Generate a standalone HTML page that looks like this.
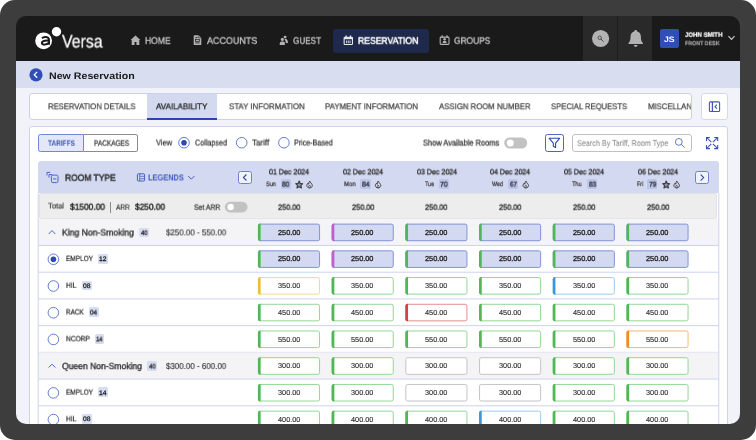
<!DOCTYPE html>
<html><head><meta charset="utf-8"><title>New Reservation</title>
<style>

html,body{margin:0;padding:0;background:#fff;}
body{width:756px;height:440px;position:relative;overflow:hidden;font-family:"Liberation Sans", sans-serif;text-rendering:geometricPrecision;}
.a{position:absolute;box-sizing:border-box;}
.t{position:absolute;white-space:nowrap;transform-origin:0 50%;will-change:transform;}

</style></head>
<body>
<div class="a" style="left:0;top:0;width:756px;height:440px;background:#3d3d3d;border-radius:15px;"></div>
<div class="a" style="left:16px;top:16px;width:724px;height:408px;border-radius:10px;overflow:hidden;"><div class="a" style="left:-16px;top:-16px;width:756px;height:440px;will-change:transform;">
<div class="a" style="left:16px;top:50px;width:724px;height:374px;background:#f2f3f8;"></div>
<div class="a" style="left:16px;top:16px;width:724px;height:45px;background:#1b1a1a;"></div>
<div class="a" style="left:583px;top:16px;width:34px;height:45px;background:#2a2929;"></div>
<div class="a" style="left:617px;top:16px;width:35px;height:45px;background:#2a2929;border-left:1px solid #1d1d1d;"></div>
<svg class="a" style="left:33px;top:24px;" width="30" height="28" viewBox="0 0 30 28"><circle cx="10.6" cy="16.8" r="8.4" fill="#fff"/><circle cx="23.5" cy="7.8" r="4.7" fill="#fff"/>
<path d="M9 14.3 C10.5 12.4 16 12.2 16 16 L16 20.8 M16 16.8 C11.5 16.2 8.8 17.2 8.8 19 C8.8 21.2 13.8 21.2 16 18.8" fill="none" stroke="#1b1a1a" stroke-width="2"/></svg>
<svg class="a" style="left:130px;top:35px;" width="11" height="11" viewBox="-1.2 -1.2 22 22"><path d="M9.8 0 L0 8.8 L2.2 8.8 L2.2 19 L7.9 19 L7.9 12.8 L11.7 12.8 L11.7 19 L17.4 19 L17.4 8.8 L19.6 8.8 Z" fill="#b2b2b2"/></svg>
<svg class="a" style="left:193px;top:35px;" width="9" height="10" viewBox="-0.7 -0.3 9 10"><path d="M0 0.4 Q0 0 0.4 0 H5 L7.6 2.6 V9.3 Q7.6 9.7 7.2 9.7 H0.4 Q0 9.7 0 9.3 Z" fill="#b2b2b2"/><path d="M1.7 2.3H3.9M1.7 7.6H5.9" stroke="#1b1a1a" stroke-width="0.8"/><rect x="1.9" y="4" width="3.8" height="2" fill="none" stroke="#1b1a1a" stroke-width="0.7"/><path d="M5 0V2.6H7.6" fill="none" stroke="#1b1a1a" stroke-width="0.5"/></svg>
<svg class="a" style="left:279px;top:35px;" width="10" height="11" viewBox="-0.5 0 10 11"><circle cx="5.6" cy="2.1" r="1.45" fill="#b2b2b2"/><path d="M5 3.9 H6.6 Q8.5 4.6 8.5 8.1 H6.2 V6.4 Q5.4 5.2 5 3.9Z" fill="#b2b2b2"/><circle cx="2.85" cy="4.4" r="1.55" fill="#b2b2b2"/><path d="M0.3 10 V8.2 Q0.3 6.5 2 6.5 H3.7 Q5.4 6.5 5.4 8.2 V10 Z" fill="#b2b2b2"/></svg>
<div class="a" style="left:332.5px;top:28.6px;width:96.4px;height:24px;background:#1f294c;border-radius:3px;"></div>
<svg class="a" style="left:343px;top:35px;" width="11" height="11" viewBox="-0.6 -0.5 11 11"><rect x="0.55" y="1.7" width="8.3" height="7.3" rx="0.8" fill="none" stroke="#e9e9f0" stroke-width="1.1"/><path d="M0.6 1.7H8.8V3.7H0.6Z" fill="#e9e9f0"/><path d="M2.5 0.1V2.4M6.9 0.1V2.4" stroke="#e9e9f0" stroke-width="1.3"/><path d="M3 5V7.7M4.7 5V7.7M6.4 5V7.7" stroke="#e9e9f0" stroke-width="0.9"/></svg>
<svg class="a" style="left:439px;top:35px;" width="11" height="11" viewBox="-0.6 -0.2 11 11"><rect x="0.6" y="1.9" width="8.8" height="7.3" rx="0.8" fill="none" stroke="#b2b2b2" stroke-width="1.1"/><path d="M2.6 0.1V2.8M7.4 0.1V2.8" stroke="#b2b2b2" stroke-width="1.2"/><circle cx="5" cy="4" r="1.3" fill="#b2b2b2"/><path d="M2.9 7.9 Q2.9 5.6 5 5.6 Q7.1 5.6 7.1 7.9Z" fill="#b2b2b2"/></svg>
<svg class="a" style="left:591px;top:29px;" width="19" height="19" viewBox="-0.6 -0.5 19 19"><circle cx="9" cy="9" r="8.6" fill="#b3b3b3"/><circle cx="8.1" cy="8.3" r="1.7" fill="none" stroke="#474747" stroke-width="0.9"/><path d="M9.5 9.7L11.6 11.8" stroke="#474747" stroke-width="1" stroke-linecap="round"/></svg>
<svg class="a" style="left:628px;top:29px;" width="16" height="19" viewBox="-0.2 -0.6 16 19"><path d="M7.5 0.5 C8.4 0.5 9 1.1 9 2 C11.8 2.6 12.7 5 12.7 7.5 C12.7 11 13.4 12.3 14.7 13.4 V14.5 H0.3 V13.4 C1.6 12.3 2.3 11 2.3 7.5 C2.3 5 3.2 2.6 6 2 C6 1.1 6.6 0.5 7.5 0.5Z" fill="#b2b2b2"/><path d="M5.7 15.5 H9.3 C9.3 17.9 5.7 17.9 5.7 15.5Z" fill="#b2b2b2"/></svg>
<div class="a" style="left:659.8px;top:29px;width:19.4px;height:19.2px;background:#2f4fb7;border-radius:2px;"></div>
<svg class="a" style="left:727px;top:35px;" width="9" height="6" viewBox="-0.5 0 9 6"><path d="M1 1.2L4 4.4L7 1.2" fill="none" stroke="#cfcfcf" stroke-width="1.1"/></svg>
<div class="a" style="left:16px;top:61px;width:724px;height:27.2px;background:#d8ddf0;"></div>
<svg class="a" style="left:29px;top:68px;" width="14" height="14" viewBox="-0.206 0 14.412 14.412"><circle cx="7" cy="7" r="6.8" fill="#2f4fb7"/><path d="M8.2 4L5.2 7L8.2 10" fill="none" stroke="#fff" stroke-width="1.3"/></svg>
<div class="a" style="left:29.3px;top:93.2px;width:662.4px;height:27px;background:#fff;border:1px solid #c9d0f0;border-radius:3px;"></div>
<div class="a" style="left:147px;top:94px;width:69.5px;height:25.4px;background:#d3d9ee;"></div>
<div class="a" style="left:147px;top:117.8px;width:69.5px;height:2.2px;background:#2a46ab;"></div>
<div class="a" style="left:700.5px;top:93.2px;width:27.5px;height:27px;background:#fff;border:1px solid #d3d8ef;border-radius:3px;"></div>
<svg class="a" style="left:708px;top:101px;" width="13" height="12" viewBox="-0.8 -0.3 13 12"><rect x="0.6" y="0.6" width="10.2" height="9.6" rx="1" fill="none" stroke="#3d58b8" stroke-width="1.1"/><path d="M3.6 0.6V10.2" stroke="#3d58b8" stroke-width="1.3"/><path d="M8.2 3.4L6.2 5.4L8.2 7.4" fill="none" stroke="#3d58b8" stroke-width="1.1"/></svg>
<div class="a" style="left:29.3px;top:125.6px;width:698.7px;height:310px;background:#fff;border:1px solid #cdd3f0;border-radius:3px;"></div>
<div class="a" style="left:38.2px;top:134.2px;width:46.3px;height:17.6px;background:#e3e7f7;border:1px solid #7087d3;border-radius:2.5px 0 0 2.5px;"></div>
<div class="a" style="left:84px;top:134.2px;width:53.8px;height:17.6px;background:#fff;border:1px solid #8c8c8c;border-radius:0 2.5px 2.5px 0;border-left:none;"></div>
<svg class="a" style="left:177px;top:136px;" width="14" height="14" viewBox="-0.5 -0.2 14 14"><circle cx="6.5" cy="6.5" r="5.3" fill="#fff" stroke="#657cd0" stroke-width="1"/><circle cx="6.5" cy="6.5" r="2.8" fill="#2c49ab"/></svg>
<svg class="a" style="left:235px;top:136px;" width="14" height="14" viewBox="-0.2 -0.2 14 14"><circle cx="6.5" cy="6.5" r="5.3" fill="#fff" stroke="#657cd0" stroke-width="1"/></svg>
<svg class="a" style="left:277px;top:136px;" width="14" height="14" viewBox="-0.4 -0.2 14 14"><circle cx="6.5" cy="6.5" r="5.3" fill="#fff" stroke="#657cd0" stroke-width="1"/></svg>
<svg class="a" style="left:504px;top:137px;" width="24" height="12" viewBox="-0.2 -0.4 24 12"><rect x="0" y="0" width="23" height="11.2" rx="5.6" fill="#c2c2c2"/><circle cx="6.1" cy="5.6" r="3.4999999999999996" fill="#fff"/></svg>
<div class="a" style="left:545.2px;top:133.8px;width:18.5px;height:18px;background:#fff;border:1px solid #4d66c2;border-radius:2.5px;"></div>
<svg class="a" style="left:548px;top:137px;" width="13" height="12" viewBox="-0.5 -0.5 13 12"><path d="M0.7 0.8H11.1L7.1 5.7V10.1L4.8 8.8V5.7Z" fill="none" stroke="#2c49ab" stroke-width="1.1" stroke-linejoin="round"/></svg>
<div class="a" style="left:572.4px;top:134.2px;width:119.4px;height:17.6px;background:#fff;border:1px solid #c0c0c0;border-radius:3px;"></div>
<svg class="a" style="left:674px;top:137px;" width="12" height="12" viewBox="-0.8 -0.9 12 12"><circle cx="4" cy="4" r="3.4" fill="none" stroke="#4f6ac6" stroke-width="0.9"/><path d="M6.4 6.4L9.8 9.6" stroke="#4f6ac6" stroke-width="0.9"/></svg>
<svg class="a" style="left:705px;top:136px;" width="14" height="14" viewBox="-0.8 -0.7 14 14"><path d="M0.7 4.2V0.7H4.2M0.7 0.7L5.5 5.5M8.4 0.7H11.9V4.2M11.9 0.7L7.1 5.5M0.7 8.4V11.9H4.2M0.7 11.9L5.5 7.1M11.9 8.4V11.9H8.4M11.9 11.9L7.1 7.1" fill="none" stroke="#3853b5" stroke-width="1.05"/></svg>
<div class="a" style="left:38.2px;top:161.2px;width:680.6px;height:32px;background:#d3d9f0;border-radius:3px 3px 0 0;"></div>
<svg class="a" style="left:46px;top:171px;" width="13" height="13" viewBox="-0.4 -0.8 13 13"><path d="M0.6 3.6V0.6H3.8M2.6 5.8V2.8H5.8" fill="none" stroke="#4a66c4" stroke-width="1"/><rect x="5" y="3.3" width="6.6" height="7.5" rx="1.5" fill="none" stroke="#4a66c4" stroke-width="1"/><path d="M6.6 7.1H10" stroke="#4a66c4" stroke-width="1"/></svg>
<svg class="a" style="left:136px;top:173px;" width="10" height="9" viewBox="-0.9 -0.3 10 9"><rect x="0.5" y="0.5" width="7.2" height="7.2" rx="0.8" fill="none" stroke="#4560bd" stroke-width="1"/><path d="M2.8 0.5V7.7M2.8 3H7.7M2.8 5.4H7.7" stroke="#4560bd" stroke-width="0.8"/></svg>
<svg class="a" style="left:187px;top:175px;" width="8" height="6" viewBox="-0.6 -0.2 8 6"><path d="M0.6 0.8L3.7 4L6.8 0.8" fill="none" stroke="#4560bd" stroke-width="1"/></svg>
<div class="a" style="left:238px;top:170.8px;width:13.9px;height:13.4px;background:#f1f3fb;border:1px solid #6c82d1;border-radius:2.5px;"></div>
<svg class="a" style="left:238px;top:170px;" width="14" height="15" viewBox="0 -0.8 14 15"><path d="M8.450000 3.700000L5.450000 6.700000L8.450000 9.700000" fill="none" stroke="#2c49ab" stroke-width="1.1"/></svg>
<div class="a" style="left:695.1px;top:170.8px;width:14.1px;height:13.5px;background:#f1f3fb;border:1px solid #6c82d1;border-radius:2.5px;"></div>
<svg class="a" style="left:695px;top:170px;" width="15" height="15" viewBox="-0.1 -0.8 15 15"><path d="M5.550000 3.750000L8.550000 6.750000L5.550000 9.750000" fill="none" stroke="#2c49ab" stroke-width="1.1"/></svg>
<div class="a" style="left:280.5px;top:179.1px;width:10.3px;height:9.8px;background:#bcc6ea;border-radius:1.5px;"></div>
<svg class="a" style="left:295px;top:180px;" width="9" height="9" viewBox="0 -0.3 9 9"><path d="M4.2 0.8L5.25 3.1L7.7 3.4L5.9 5.1L6.4 7.6L4.2 6.35L2 7.6L2.5 5.1L0.7 3.4L3.15 3.1Z" fill="#8d93a8" stroke="#3d3d3d" stroke-width="1.15" stroke-linejoin="round"/></svg>
<svg class="a" style="left:306px;top:180px;" width="8" height="9" viewBox="-0.1 -0.4 8 9"><path d="M3.6 0.6C3.9 2.2 6.2 3.2 6.2 5.2C6.2 6.6 5.1 7.5 3.5 7.5C1.9 7.5 0.7 6.6 0.7 5.1C0.7 4.1 1.3 3.3 1.9 2.8C2 3.5 2.4 3.8 2.7 3.9C2.6 2.6 2.9 1.4 3.6 0.6Z" fill="none" stroke="#3a3a3a" stroke-width="0.9" stroke-linejoin="round"/><path d="M3.5 7.3C2.8 7.3 2.5 6.8 2.5 6.3C2.5 5.7 3 5.4 3.5 4.6C4 5.4 4.5 5.7 4.5 6.3C4.5 6.8 4.2 7.3 3.5 7.3Z" fill="none" stroke="#3a3a3a" stroke-width="0.7"/></svg>
<div class="a" style="left:360px;top:179.1px;width:10.5px;height:9.8px;background:#bcc6ea;border-radius:1.5px;"></div>
<svg class="a" style="left:374px;top:180px;" width="8" height="9" viewBox="-0.6 -0.4 8 9"><path d="M3.6 0.6C3.9 2.2 6.2 3.2 6.2 5.2C6.2 6.6 5.1 7.5 3.5 7.5C1.9 7.5 0.7 6.6 0.7 5.1C0.7 4.1 1.3 3.3 1.9 2.8C2 3.5 2.4 3.8 2.7 3.9C2.6 2.6 2.9 1.4 3.6 0.6Z" fill="none" stroke="#3a3a3a" stroke-width="0.9" stroke-linejoin="round"/><path d="M3.5 7.3C2.8 7.3 2.5 6.8 2.5 6.3C2.5 5.7 3 5.4 3.5 4.6C4 5.4 4.5 5.7 4.5 6.3C4.5 6.8 4.2 7.3 3.5 7.3Z" fill="none" stroke="#3a3a3a" stroke-width="0.7"/></svg>
<div class="a" style="left:438.6px;top:179.1px;width:10.6px;height:9.8px;background:#bcc6ea;border-radius:1.5px;"></div>
<div class="a" style="left:508px;top:179.1px;width:10px;height:9.8px;background:#bcc6ea;border-radius:1.5px;"></div>
<svg class="a" style="left:522px;top:180px;" width="8" height="9" viewBox="-0.3 -0.4 8 9"><path d="M3.6 0.6C3.9 2.2 6.2 3.2 6.2 5.2C6.2 6.6 5.1 7.5 3.5 7.5C1.9 7.5 0.7 6.6 0.7 5.1C0.7 4.1 1.3 3.3 1.9 2.8C2 3.5 2.4 3.8 2.7 3.9C2.6 2.6 2.9 1.4 3.6 0.6Z" fill="none" stroke="#3a3a3a" stroke-width="0.9" stroke-linejoin="round"/><path d="M3.5 7.3C2.8 7.3 2.5 6.8 2.5 6.3C2.5 5.7 3 5.4 3.5 4.6C4 5.4 4.5 5.7 4.5 6.3C4.5 6.8 4.2 7.3 3.5 7.3Z" fill="none" stroke="#3a3a3a" stroke-width="0.7"/></svg>
<div class="a" style="left:587px;top:179.1px;width:10.2px;height:9.8px;background:#bcc6ea;border-radius:1.5px;"></div>
<div class="a" style="left:647.2px;top:179.1px;width:10.3px;height:9.8px;background:#bcc6ea;border-radius:1.5px;"></div>
<svg class="a" style="left:662px;top:180px;" width="9" height="9" viewBox="0 -0.3 9 9"><path d="M4.2 0.8L5.25 3.1L7.7 3.4L5.9 5.1L6.4 7.6L4.2 6.35L2 7.6L2.5 5.1L0.7 3.4L3.15 3.1Z" fill="#8d93a8" stroke="#3d3d3d" stroke-width="1.15" stroke-linejoin="round"/></svg>
<svg class="a" style="left:673px;top:180px;" width="8" height="9" viewBox="-0.2 -0.4 8 9"><path d="M3.6 0.6C3.9 2.2 6.2 3.2 6.2 5.2C6.2 6.6 5.1 7.5 3.5 7.5C1.9 7.5 0.7 6.6 0.7 5.1C0.7 4.1 1.3 3.3 1.9 2.8C2 3.5 2.4 3.8 2.7 3.9C2.6 2.6 2.9 1.4 3.6 0.6Z" fill="none" stroke="#3a3a3a" stroke-width="0.9" stroke-linejoin="round"/><path d="M3.5 7.3C2.8 7.3 2.5 6.8 2.5 6.3C2.5 5.7 3 5.4 3.5 4.6C4 5.4 4.5 5.7 4.5 6.3C4.5 6.8 4.2 7.3 3.5 7.3Z" fill="none" stroke="#3a3a3a" stroke-width="0.7"/></svg>
<div class="a" style="left:38.8px;top:193.4px;width:678.6px;height:25.2px;background:#ededed;border:1px solid #e2e2e2;border-radius:2px;"></div>
<div class="a" style="left:110.3px;top:201.5px;width:0.9px;height:11.5px;background:#8a8a8a;"></div>
<svg class="a" style="left:224px;top:201px;" width="24" height="12" viewBox="-0.8 -0.7 24 12"><rect x="0" y="0" width="22.8" height="10.7" rx="5.35" fill="#c2c2c2"/><circle cx="5.85" cy="5.35" r="3.2499999999999996" fill="#fff"/></svg>
<svg class="a" style="left:0;top:0;" width="756" height="440" viewBox="0 0 756 440">
<rect x="38.2" y="218.8" width="680.6" height="26.72" fill="#f4f4f6"/>
<rect x="38.2" y="244.97" width="680.6" height="1" fill="#ccd3f1"/>
<rect x="38.2" y="271.69" width="680.6" height="1" fill="#ccd3f1"/>
<rect x="38.2" y="298.41" width="680.6" height="1" fill="#ccd3f1"/>
<rect x="38.2" y="325.13" width="680.6" height="1" fill="#ccd3f1"/>
<rect x="38.2" y="351.85" width="680.6" height="1" fill="#ccd3f1"/>
<rect x="38.2" y="352.4" width="680.6" height="26.72" fill="#f4f4f6"/>
<rect x="38.2" y="378.57" width="680.6" height="1" fill="#ccd3f1"/>
<rect x="38.2" y="405.29" width="680.6" height="1" fill="#ccd3f1"/>
<rect x="38.2" y="432.01" width="680.6" height="1" fill="#ccd3f1"/>
<rect x="258.45" y="224.11" width="61.1" height="16.6" rx="1.8" fill="#d3d9f0" stroke="#8094da"/>
<path d="M260.65 223.61H260.05Q257.95 223.61 257.95 225.71V239.11Q257.95 241.21 260.05 241.21H260.65Z" fill="#52b657"/>
<rect x="332.15" y="224.11" width="61.1" height="16.6" rx="1.8" fill="#d3d9f0" stroke="#8094da"/>
<path d="M334.35 223.61H333.75Q331.65 223.61 331.65 225.71V239.11Q331.65 241.21 333.75 241.21H334.35Z" fill="#c25fd0"/>
<rect x="405.85" y="224.11" width="61.1" height="16.6" rx="1.8" fill="#d3d9f0" stroke="#8094da"/>
<path d="M408.05 223.61H407.45Q405.35 223.61 405.35 225.71V239.11Q405.35 241.21 407.45 241.21H408.05Z" fill="#52b657"/>
<rect x="479.55" y="224.11" width="61.1" height="16.6" rx="1.8" fill="#d3d9f0" stroke="#8094da"/>
<path d="M481.75 223.61H481.15Q479.05 223.61 479.05 225.71V239.11Q479.05 241.21 481.15 241.21H481.75Z" fill="#52b657"/>
<rect x="553.25" y="224.11" width="61.1" height="16.6" rx="1.8" fill="#d3d9f0" stroke="#8094da"/>
<path d="M555.45 223.61H554.85Q552.75 223.61 552.75 225.71V239.11Q552.75 241.21 554.85 241.21H555.45Z" fill="#52b657"/>
<rect x="626.95" y="224.11" width="61.1" height="16.6" rx="1.8" fill="#d3d9f0" stroke="#8094da"/>
<path d="M629.15 223.61H628.55Q626.45 223.61 626.45 225.71V239.11Q626.45 241.21 628.55 241.21H629.15Z" fill="#52b657"/>
<rect x="258.45" y="250.83" width="61.1" height="16.6" rx="1.8" fill="#d3d9f0" stroke="#8094da"/>
<path d="M260.65 250.33H260.05Q257.95 250.33 257.95 252.43V265.83Q257.95 267.93 260.05 267.93H260.65Z" fill="#52b657"/>
<rect x="332.15" y="250.83" width="61.1" height="16.6" rx="1.8" fill="#d3d9f0" stroke="#8094da"/>
<path d="M334.35 250.33H333.75Q331.65 250.33 331.65 252.43V265.83Q331.65 267.93 333.75 267.93H334.35Z" fill="#c25fd0"/>
<rect x="405.85" y="250.83" width="61.1" height="16.6" rx="1.8" fill="#d3d9f0" stroke="#8094da"/>
<path d="M408.05 250.33H407.45Q405.35 250.33 405.35 252.43V265.83Q405.35 267.93 407.45 267.93H408.05Z" fill="#52b657"/>
<rect x="479.55" y="250.83" width="61.1" height="16.6" rx="1.8" fill="#d3d9f0" stroke="#8094da"/>
<path d="M481.75 250.33H481.15Q479.05 250.33 479.05 252.43V265.83Q479.05 267.93 481.15 267.93H481.75Z" fill="#52b657"/>
<rect x="553.25" y="250.83" width="61.1" height="16.6" rx="1.8" fill="#d3d9f0" stroke="#8094da"/>
<path d="M555.45 250.33H554.85Q552.75 250.33 552.75 252.43V265.83Q552.75 267.93 554.85 267.93H555.45Z" fill="#52b657"/>
<rect x="626.95" y="250.83" width="61.1" height="16.6" rx="1.8" fill="#d3d9f0" stroke="#8094da"/>
<path d="M629.15 250.33H628.55Q626.45 250.33 626.45 252.43V265.83Q626.45 267.93 628.55 267.93H629.15Z" fill="#52b657"/>
<rect x="258.45" y="277.55" width="61.1" height="16.6" rx="1.8" fill="#fff" stroke="#f0da96"/>
<path d="M260.65 277.05H260.05Q257.95 277.05 257.95 279.15V292.55Q257.95 294.65 260.05 294.65H260.65Z" fill="#e6bf3c"/>
<rect x="332.15" y="277.55" width="61.1" height="16.6" rx="1.8" fill="#fff" stroke="#93d697"/>
<path d="M334.35 277.05H333.75Q331.65 277.05 331.65 279.15V292.55Q331.65 294.65 333.75 294.65H334.35Z" fill="#52b657"/>
<rect x="405.85" y="277.55" width="61.1" height="16.6" rx="1.8" fill="#fff" stroke="#93d697"/>
<path d="M408.05 277.05H407.45Q405.35 277.05 405.35 279.15V292.55Q405.35 294.65 407.45 294.65H408.05Z" fill="#52b657"/>
<rect x="479.55" y="277.55" width="61.1" height="16.6" rx="1.8" fill="#fff" stroke="#93d697"/>
<path d="M481.75 277.05H481.15Q479.05 277.05 479.05 279.15V292.55Q479.05 294.65 481.15 294.65H481.75Z" fill="#52b657"/>
<rect x="553.25" y="277.55" width="61.1" height="16.6" rx="1.8" fill="#fff" stroke="#9ccbee"/>
<path d="M555.45 277.05H554.85Q552.75 277.05 552.75 279.15V292.55Q552.75 294.65 554.85 294.65H555.45Z" fill="#3b97d8"/>
<rect x="626.95" y="277.55" width="61.1" height="16.6" rx="1.8" fill="#fff" stroke="#93d697"/>
<path d="M629.15 277.05H628.55Q626.45 277.05 626.45 279.15V292.55Q626.45 294.65 628.55 294.65H629.15Z" fill="#52b657"/>
<rect x="258.45" y="304.27" width="61.1" height="16.6" rx="1.8" fill="#fff" stroke="#93d697"/>
<path d="M260.65 303.77H260.05Q257.95 303.77 257.95 305.87V319.27Q257.95 321.37 260.05 321.37H260.65Z" fill="#52b657"/>
<rect x="332.15" y="304.27" width="61.1" height="16.6" rx="1.8" fill="#fff" stroke="#93d697"/>
<path d="M334.35 303.77H333.75Q331.65 303.77 331.65 305.87V319.27Q331.65 321.37 333.75 321.37H334.35Z" fill="#52b657"/>
<rect x="405.85" y="304.27" width="61.1" height="16.6" rx="1.8" fill="#fff" stroke="#e38c8c"/>
<path d="M408.05 303.77H407.45Q405.35 303.77 405.35 305.87V319.27Q405.35 321.37 407.45 321.37H408.05Z" fill="#d04545"/>
<rect x="479.55" y="304.27" width="61.1" height="16.6" rx="1.8" fill="#fff" stroke="#93d697"/>
<path d="M481.75 303.77H481.15Q479.05 303.77 479.05 305.87V319.27Q479.05 321.37 481.15 321.37H481.75Z" fill="#52b657"/>
<rect x="553.25" y="304.27" width="61.1" height="16.6" rx="1.8" fill="#fff" stroke="#93d697"/>
<path d="M555.45 303.77H554.85Q552.75 303.77 552.75 305.87V319.27Q552.75 321.37 554.85 321.37H555.45Z" fill="#52b657"/>
<rect x="626.95" y="304.27" width="61.1" height="16.6" rx="1.8" fill="#fff" stroke="#93d697"/>
<path d="M629.15 303.77H628.55Q626.45 303.77 626.45 305.87V319.27Q626.45 321.37 628.55 321.37H629.15Z" fill="#52b657"/>
<rect x="258.45" y="330.99" width="61.1" height="16.6" rx="1.8" fill="#fff" stroke="#93d697"/>
<path d="M260.65 330.49H260.05Q257.95 330.49 257.95 332.59V345.99Q257.95 348.09 260.05 348.09H260.65Z" fill="#52b657"/>
<rect x="332.15" y="330.99" width="61.1" height="16.6" rx="1.8" fill="#fff" stroke="#93d697"/>
<path d="M334.35 330.49H333.75Q331.65 330.49 331.65 332.59V345.99Q331.65 348.09 333.75 348.09H334.35Z" fill="#52b657"/>
<rect x="405.85" y="330.99" width="61.1" height="16.6" rx="1.8" fill="#fff" stroke="#93d697"/>
<path d="M408.05 330.49H407.45Q405.35 330.49 405.35 332.59V345.99Q405.35 348.09 407.45 348.09H408.05Z" fill="#52b657"/>
<rect x="479.55" y="330.99" width="61.1" height="16.6" rx="1.8" fill="#fff" stroke="#93d697"/>
<path d="M481.75 330.49H481.15Q479.05 330.49 479.05 332.59V345.99Q479.05 348.09 481.15 348.09H481.75Z" fill="#52b657"/>
<rect x="553.25" y="330.99" width="61.1" height="16.6" rx="1.8" fill="#fff" stroke="#93d697"/>
<path d="M555.45 330.49H554.85Q552.75 330.49 552.75 332.59V345.99Q552.75 348.09 554.85 348.09H555.45Z" fill="#52b657"/>
<rect x="626.95" y="330.99" width="61.1" height="16.6" rx="1.8" fill="#fff" stroke="#f5b772"/>
<path d="M629.15 330.49H628.55Q626.45 330.49 626.45 332.59V345.99Q626.45 348.09 628.55 348.09H629.15Z" fill="#f08c1e"/>
<rect x="258.45" y="357.71" width="61.1" height="16.6" rx="1.8" fill="#fff" stroke="#93d697"/>
<path d="M260.65 357.21H260.05Q257.95 357.21 257.95 359.31V372.71Q257.95 374.81 260.05 374.81H260.65Z" fill="#52b657"/>
<rect x="332.15" y="357.71" width="61.1" height="16.6" rx="1.8" fill="#fff" stroke="#93d697"/>
<path d="M334.35 357.21H333.75Q331.65 357.21 331.65 359.31V372.71Q331.65 374.81 333.75 374.81H334.35Z" fill="#52b657"/>
<rect x="405.85" y="357.71" width="61.1" height="16.6" rx="1.8" fill="#fff" stroke="#c4c4c4"/>
<rect x="479.55" y="357.71" width="61.1" height="16.6" rx="1.8" fill="#fff" stroke="#c4c4c4"/>
<rect x="553.25" y="357.71" width="61.1" height="16.6" rx="1.8" fill="#fff" stroke="#93d697"/>
<path d="M555.45 357.21H554.85Q552.75 357.21 552.75 359.31V372.71Q552.75 374.81 554.85 374.81H555.45Z" fill="#52b657"/>
<rect x="626.95" y="357.71" width="61.1" height="16.6" rx="1.8" fill="#fff" stroke="#93d697"/>
<path d="M629.15 357.21H628.55Q626.45 357.21 626.45 359.31V372.71Q626.45 374.81 628.55 374.81H629.15Z" fill="#52b657"/>
<rect x="258.45" y="384.43" width="61.1" height="16.6" rx="1.8" fill="#fff" stroke="#93d697"/>
<path d="M260.65 383.93H260.05Q257.95 383.93 257.95 386.03V399.43Q257.95 401.53 260.05 401.53H260.65Z" fill="#52b657"/>
<rect x="332.15" y="384.43" width="61.1" height="16.6" rx="1.8" fill="#fff" stroke="#93d697"/>
<path d="M334.35 383.93H333.75Q331.65 383.93 331.65 386.03V399.43Q331.65 401.53 333.75 401.53H334.35Z" fill="#52b657"/>
<rect x="405.85" y="384.43" width="61.1" height="16.6" rx="1.8" fill="#fff" stroke="#c4c4c4"/>
<rect x="479.55" y="384.43" width="61.1" height="16.6" rx="1.8" fill="#fff" stroke="#c4c4c4"/>
<rect x="553.25" y="384.43" width="61.1" height="16.6" rx="1.8" fill="#fff" stroke="#93d697"/>
<path d="M555.45 383.93H554.85Q552.75 383.93 552.75 386.03V399.43Q552.75 401.53 554.85 401.53H555.45Z" fill="#52b657"/>
<rect x="626.95" y="384.43" width="61.1" height="16.6" rx="1.8" fill="#fff" stroke="#93d697"/>
<path d="M629.15 383.93H628.55Q626.45 383.93 626.45 386.03V399.43Q626.45 401.53 628.55 401.53H629.15Z" fill="#52b657"/>
<rect x="258.45" y="411.15" width="61.1" height="16.6" rx="1.8" fill="#fff" stroke="#93d697"/>
<path d="M260.65 410.65H260.05Q257.95 410.65 257.95 412.75V426.15Q257.95 428.25 260.05 428.25H260.65Z" fill="#52b657"/>
<rect x="332.15" y="411.15" width="61.1" height="16.6" rx="1.8" fill="#fff" stroke="#93d697"/>
<path d="M334.35 410.65H333.75Q331.65 410.65 331.65 412.75V426.15Q331.65 428.25 333.75 428.25H334.35Z" fill="#52b657"/>
<rect x="405.85" y="411.15" width="61.1" height="16.6" rx="1.8" fill="#fff" stroke="#93d697"/>
<path d="M408.05 410.65H407.45Q405.35 410.65 405.35 412.75V426.15Q405.35 428.25 407.45 428.25H408.05Z" fill="#52b657"/>
<rect x="479.55" y="411.15" width="61.1" height="16.6" rx="1.8" fill="#fff" stroke="#9ccbee"/>
<path d="M481.75 410.65H481.15Q479.05 410.65 479.05 412.75V426.15Q479.05 428.25 481.15 428.25H481.75Z" fill="#3b97d8"/>
<rect x="553.25" y="411.15" width="61.1" height="16.6" rx="1.8" fill="#fff" stroke="#93d697"/>
<path d="M555.45 410.65H554.85Q552.75 410.65 552.75 412.75V426.15Q552.75 428.25 554.85 428.25H555.45Z" fill="#52b657"/>
<rect x="626.95" y="411.15" width="61.1" height="16.6" rx="1.8" fill="#fff" stroke="#93d697"/>
<path d="M629.15 410.65H628.55Q626.45 410.65 626.45 412.75V426.15Q626.45 428.25 628.55 428.25H629.15Z" fill="#52b657"/>
<rect x="718.3" y="193" width="1" height="240" fill="#ccd3f1"/>
<rect x="37.7" y="193" width="1" height="240" fill="#ccd3f1"/>
</svg>
<svg class="a" style="left:48px;top:229px;" width="8" height="6" viewBox="0 -0.36 8 6"><path d="M0.7 4.6L4 1.2L7.3 4.6" fill="none" stroke="#4a64c2" stroke-width="1"/></svg>
<div class="a" style="left:139px;top:227.66px;width:9.8px;height:9.8px;background:#d6dcf2;border-radius:1.5px;"></div>
<svg class="a" style="left:46px;top:252px;" width="14" height="14" viewBox="-0.9 -0.78 14 14"><circle cx="6.5" cy="6.5" r="5.3" fill="#fff" stroke="#657cd0" stroke-width="1"/><circle cx="6.5" cy="6.5" r="2.8" fill="#2c49ab"/></svg>
<div class="a" style="left:97.5px;top:253.88px;width:10.7px;height:9.8px;background:#d6dcf2;border-radius:1.5px;"></div>
<svg class="a" style="left:46px;top:279px;" width="14" height="14" viewBox="-0.9 -0.5 14 14"><circle cx="6.5" cy="6.5" r="5.3" fill="#fff" stroke="#657cd0" stroke-width="1"/></svg>
<div class="a" style="left:81.7px;top:280.6px;width:10.7px;height:9.8px;background:#d6dcf2;border-radius:1.5px;"></div>
<svg class="a" style="left:46px;top:306px;" width="14" height="14" viewBox="-0.9 -0.22 14 14"><circle cx="6.5" cy="6.5" r="5.3" fill="#fff" stroke="#657cd0" stroke-width="1"/></svg>
<div class="a" style="left:88.7px;top:307.32px;width:10.3px;height:9.8px;background:#d6dcf2;border-radius:1.5px;"></div>
<svg class="a" style="left:46px;top:332px;" width="14" height="14" viewBox="-0.9 -0.94 14 14"><circle cx="6.5" cy="6.5" r="5.3" fill="#fff" stroke="#657cd0" stroke-width="1"/></svg>
<div class="a" style="left:94.8px;top:334.04px;width:9.7px;height:9.8px;background:#d6dcf2;border-radius:1.5px;"></div>
<svg class="a" style="left:48px;top:362px;" width="8" height="7" viewBox="0 -0.96 8 7"><path d="M0.7 4.6L4 1.2L7.3 4.6" fill="none" stroke="#4a64c2" stroke-width="1"/></svg>
<div class="a" style="left:147px;top:361.26px;width:9.9px;height:9.8px;background:#d6dcf2;border-radius:1.5px;"></div>
<svg class="a" style="left:46px;top:386px;" width="14" height="14" viewBox="-0.9 -0.38 14 14"><circle cx="6.5" cy="6.5" r="5.3" fill="#fff" stroke="#657cd0" stroke-width="1"/></svg>
<div class="a" style="left:97.5px;top:387.48px;width:10.7px;height:9.8px;background:#d6dcf2;border-radius:1.5px;"></div>
<svg class="a" style="left:46px;top:413px;" width="14" height="14" viewBox="-0.9 -0.1 14 14"><circle cx="6.5" cy="6.5" r="5.3" fill="#fff" stroke="#657cd0" stroke-width="1"/></svg>
<div class="a" style="left:81.7px;top:414.2px;width:10.7px;height:9.8px;background:#d6dcf2;border-radius:1.5px;"></div>
<span class="t" style="left:62.4px;top:31px;font-size:18px;line-height:20px;color:#fff;transform:translateY(0.44px) scaleX(0.882);-webkit-text-stroke:0.25px #fff;">Versa</span>
<span class="t" style="left:145.2px;top:36px;font-size:9.5px;line-height:11px;color:#c9c9c9;transform:translateY(-0.20px) scaleX(0.898);-webkit-text-stroke:0.3px #c9c9c9;">HOME</span>
<span class="t" style="left:206.7px;top:36px;font-size:9.5px;line-height:11px;color:#c9c9c9;transform:translateY(-0.20px) scaleX(0.943);-webkit-text-stroke:0.3px #c9c9c9;">ACCOUNTS</span>
<span class="t" style="left:292.6px;top:36px;font-size:9.5px;line-height:11px;color:#c9c9c9;transform:translateY(-0.20px) scaleX(0.855);-webkit-text-stroke:0.3px #c9c9c9;">GUEST</span>
<span class="t" style="left:357.5px;top:36px;font-size:9.5px;line-height:11px;color:#fff;transform:translateY(-0.20px) scaleX(0.907);-webkit-text-stroke:0.5px #fff;">RESERVATION</span>
<span class="t" style="left:453.7px;top:36px;font-size:9.5px;line-height:11px;color:#c9c9c9;transform:translateY(-0.20px) scaleX(0.881);-webkit-text-stroke:0.3px #c9c9c9;">GROUPS</span>
<span class="t" style="left:664.2px;top:35px;font-size:8px;line-height:9px;font-weight:700;color:#fff;transform:translateY(-0.44px) scaleX(1.082);">JS</span>
<span class="t" style="left:685px;top:32px;font-size:6.6px;line-height:7px;font-weight:700;color:#fff;transform:translateY(-0.14px) scaleX(0.920);-webkit-text-stroke:0.2px #fff;">JOHN SMITH</span>
<span class="t" style="left:685px;top:41px;font-size:6px;line-height:6px;font-weight:700;color:#a9a9a9;transform:translateY(0.25px) scaleX(0.885);-webkit-text-stroke:0.15px #a9a9a9;">FRONT DESK</span>
<span class="t" style="left:49.3px;top:71px;font-size:9.6px;line-height:11px;font-weight:700;color:#1a1a1a;transform:translateY(-0.36px) scaleX(1.108);">New Reservation</span>
<span class="t" style="left:48px;top:102px;font-size:8.2px;line-height:9px;color:#454545;transform:translateY(0.14px) scaleX(0.939);-webkit-text-stroke:0.25px #454545;">RESERVATION DETAILS</span>
<span class="t" style="left:156.3px;top:102px;font-size:8.2px;line-height:9px;color:#1e1e1e;transform:translateY(0.14px) scaleX(0.979);-webkit-text-stroke:0.25px #1e1e1e;">AVAILABILITY</span>
<span class="t" style="left:228.6px;top:102px;font-size:8.2px;line-height:9px;color:#454545;transform:translateY(0.14px) scaleX(0.959);-webkit-text-stroke:0.25px #454545;">STAY INFORMATION</span>
<span class="t" style="left:325.3px;top:102px;font-size:8.2px;line-height:9px;color:#454545;transform:translateY(0.14px) scaleX(0.957);-webkit-text-stroke:0.25px #454545;">PAYMENT INFORMATION</span>
<span class="t" style="left:439.2px;top:102px;font-size:8.2px;line-height:9px;color:#454545;transform:translateY(0.14px) scaleX(0.950);-webkit-text-stroke:0.25px #454545;">ASSIGN ROOM NUMBER</span>
<span class="t" style="left:551px;top:102px;font-size:8.2px;line-height:9px;color:#454545;transform:translateY(0.14px) scaleX(0.931);-webkit-text-stroke:0.25px #454545;">SPECIAL REQUESTS</span>
<div class="a" style="left:640px;top:95px;width:51px;height:22px;overflow:hidden;"><span class="t" style="left:7.8px;top:7px;font-size:8.2px;line-height:9px;color:#454545;transform:translateY(0.14px) scaleX(0.945);-webkit-text-stroke:0.25px #454545;">MISCELLANEOUS</span></div>
<span class="t" style="left:48px;top:139px;font-size:7.9px;line-height:9px;font-weight:700;color:#3d58b8;transform:translateY(-0.27px) scaleX(0.822);">TARIFFS</span>
<span class="t" style="left:93.8px;top:139px;font-size:7.9px;line-height:9px;color:#454545;transform:translateY(-0.27px) scaleX(0.822);-webkit-text-stroke:0.3px #454545;">PACKAGES</span>
<span class="t" style="left:156.3px;top:137px;font-size:8.6px;line-height:10px;color:#2e2e2e;transform:translateY(0.48px) scaleX(0.871);-webkit-text-stroke:0.2px #2e2e2e;">View</span>
<span class="t" style="left:195px;top:137px;font-size:8.6px;line-height:10px;color:#2e2e2e;transform:translateY(0.48px) scaleX(0.837);-webkit-text-stroke:0.2px #2e2e2e;">Collapsed</span>
<span class="t" style="left:252px;top:137px;font-size:8.6px;line-height:10px;color:#2e2e2e;transform:translateY(0.48px) scaleX(0.931);-webkit-text-stroke:0.2px #2e2e2e;">Tariff</span>
<span class="t" style="left:294.2px;top:137px;font-size:8.6px;line-height:10px;color:#2e2e2e;transform:translateY(0.48px) scaleX(0.829);-webkit-text-stroke:0.2px #2e2e2e;">Price-Based</span>
<span class="t" style="left:423.4px;top:138px;font-size:8.4px;line-height:10px;color:#454545;transform:translateY(-0.49px) scaleX(0.891);-webkit-text-stroke:0.35px #454545;">Show Available Rooms</span>
<span class="t" style="left:577.2px;top:139px;font-size:8.2px;line-height:9px;color:#8e8e8e;transform:translateY(-0.16px) scaleX(0.880);-webkit-text-stroke:0.1px #8e8e8e;">Search By Tariff, Room Type</span>
<span class="t" style="left:65.3px;top:173px;font-size:9px;line-height:10px;color:#2b2b2b;transform:translateY(-0.28px) scaleX(0.942);-webkit-text-stroke:0.45px #2b2b2b;">ROOM TYPE</span>
<span class="t" style="left:148px;top:172px;font-size:8.6px;line-height:10px;font-weight:700;color:#3d58b8;transform:translateY(0.38px) scaleX(0.862);">LEGENDS</span>
<span class="t" style="left:269.1px;top:167px;font-size:7.6px;line-height:9px;color:#222;transform:translateY(0.32px) scaleX(0.933);-webkit-text-stroke:0.28px #222;">01 Dec 2024</span>
<span class="t" style="left:265.9px;top:181px;font-size:6.6px;line-height:7px;color:#2e2e2e;transform:translateY(0.16px) scaleX(0.852);-webkit-text-stroke:0.2px #2e2e2e;">Sun</span>
<span class="t" style="left:282px;top:180px;font-size:7.2px;line-height:9px;color:#2b2b2b;transform:translateY(-0.42px) scaleX(0.913);-webkit-text-stroke:0.3px #2b2b2b;">80</span>
<span class="t" style="left:342.8px;top:167px;font-size:7.6px;line-height:9px;color:#222;transform:translateY(0.32px) scaleX(0.933);-webkit-text-stroke:0.28px #222;">02 Dec 2024</span>
<span class="t" style="left:344.3px;top:181px;font-size:6.6px;line-height:7px;color:#2e2e2e;transform:translateY(0.16px) scaleX(0.904);-webkit-text-stroke:0.2px #2e2e2e;">Mon</span>
<span class="t" style="left:361.5px;top:180px;font-size:7.2px;line-height:9px;color:#2b2b2b;transform:translateY(-0.42px) scaleX(0.938);-webkit-text-stroke:0.3px #2b2b2b;">84</span>
<span class="t" style="left:416.5px;top:167px;font-size:7.6px;line-height:9px;color:#222;transform:translateY(0.32px) scaleX(0.933);-webkit-text-stroke:0.28px #222;">03 Dec 2024</span>
<span class="t" style="left:425px;top:181px;font-size:6.6px;line-height:7px;color:#2e2e2e;transform:translateY(0.16px) scaleX(0.809);-webkit-text-stroke:0.2px #2e2e2e;">Tue</span>
<span class="t" style="left:440.1px;top:180px;font-size:7.2px;line-height:9px;color:#2b2b2b;transform:translateY(-0.42px) scaleX(0.950);-webkit-text-stroke:0.3px #2b2b2b;">70</span>
<span class="t" style="left:490.2px;top:167px;font-size:7.6px;line-height:9px;color:#222;transform:translateY(0.32px) scaleX(0.933);-webkit-text-stroke:0.28px #222;">04 Dec 2024</span>
<span class="t" style="left:492px;top:181px;font-size:6.6px;line-height:7px;color:#2e2e2e;transform:translateY(0.16px) scaleX(0.818);-webkit-text-stroke:0.2px #2e2e2e;">Wed</span>
<span class="t" style="left:509.5px;top:180px;font-size:7.2px;line-height:9px;color:#2b2b2b;transform:translateY(-0.42px) scaleX(0.875);-webkit-text-stroke:0.3px #2b2b2b;">67</span>
<span class="t" style="left:563.9px;top:167px;font-size:7.6px;line-height:9px;color:#222;transform:translateY(0.32px) scaleX(0.933);-webkit-text-stroke:0.28px #222;">05 Dec 2024</span>
<span class="t" style="left:572.3px;top:181px;font-size:6.6px;line-height:7px;color:#2e2e2e;transform:translateY(0.16px) scaleX(0.853);-webkit-text-stroke:0.2px #2e2e2e;">Thu</span>
<span class="t" style="left:588.5px;top:180px;font-size:7.2px;line-height:9px;color:#2b2b2b;transform:translateY(-0.42px) scaleX(0.900);-webkit-text-stroke:0.3px #2b2b2b;">83</span>
<span class="t" style="left:637.6px;top:167px;font-size:7.6px;line-height:9px;color:#222;transform:translateY(0.32px) scaleX(0.933);-webkit-text-stroke:0.28px #222;">06 Dec 2024</span>
<span class="t" style="left:636.5px;top:181px;font-size:6.6px;line-height:7px;color:#2e2e2e;transform:translateY(0.16px) scaleX(0.805);-webkit-text-stroke:0.2px #2e2e2e;">Fri</span>
<span class="t" style="left:648.7px;top:180px;font-size:7.2px;line-height:9px;color:#2b2b2b;transform:translateY(-0.42px) scaleX(0.912);-webkit-text-stroke:0.3px #2b2b2b;">79</span>
<span class="t" style="left:48.4px;top:201px;font-size:7.8px;line-height:9px;color:#2b2b2b;transform:translateY(0.49px) scaleX(0.971);-webkit-text-stroke:0.15px #2b2b2b;">Total</span>
<span class="t" style="left:69.5px;top:202px;font-size:8.8px;line-height:10px;color:#1e1e1e;transform:translateY(-0.25px) scaleX(0.954);-webkit-text-stroke:0.4px #1e1e1e;">$1500.00</span>
<span class="t" style="left:116px;top:203px;font-size:7.8px;line-height:9px;color:#2b2b2b;transform:translateY(-0.21px) scaleX(0.838);-webkit-text-stroke:0.15px #2b2b2b;">ARR</span>
<span class="t" style="left:135px;top:202px;font-size:8.8px;line-height:10px;color:#1e1e1e;transform:translateY(-0.25px) scaleX(0.943);-webkit-text-stroke:0.4px #1e1e1e;">$250.00</span>
<span class="t" style="left:193.7px;top:203px;font-size:7.8px;line-height:9px;color:#444;transform:translateY(-0.21px) scaleX(0.879);-webkit-text-stroke:0.3px #444;">Set ARR</span>
<span class="t" style="left:278px;top:203px;font-size:7.6px;line-height:9px;color:#2b2b2b;transform:translateY(-0.28px) scaleX(0.964);-webkit-text-stroke:0.35px #2b2b2b;">250.00</span>
<span class="t" style="left:351.7px;top:203px;font-size:7.6px;line-height:9px;color:#2b2b2b;transform:translateY(-0.28px) scaleX(0.964);-webkit-text-stroke:0.35px #2b2b2b;">250.00</span>
<span class="t" style="left:425.4px;top:203px;font-size:7.6px;line-height:9px;color:#2b2b2b;transform:translateY(-0.28px) scaleX(0.964);-webkit-text-stroke:0.35px #2b2b2b;">250.00</span>
<span class="t" style="left:499.1px;top:203px;font-size:7.6px;line-height:9px;color:#2b2b2b;transform:translateY(-0.28px) scaleX(0.964);-webkit-text-stroke:0.35px #2b2b2b;">250.00</span>
<span class="t" style="left:572.8px;top:203px;font-size:7.6px;line-height:9px;color:#2b2b2b;transform:translateY(-0.28px) scaleX(0.964);-webkit-text-stroke:0.35px #2b2b2b;">250.00</span>
<span class="t" style="left:646.5px;top:203px;font-size:7.6px;line-height:9px;color:#2b2b2b;transform:translateY(-0.28px) scaleX(0.964);-webkit-text-stroke:0.35px #2b2b2b;">250.00</span>
<span class="t" style="left:62px;top:227px;font-size:9px;line-height:10px;color:#262626;transform:translateY(0.48px) scaleX(0.959);-webkit-text-stroke:0.3px #262626;">King Non-Smoking</span>
<span class="t" style="left:140.6px;top:230px;font-size:6.5px;line-height:7px;color:#262626;transform:translateY(-0.11px) scaleX(0.912);-webkit-text-stroke:0.3px #262626;">40</span>
<span class="t" style="left:166px;top:227px;font-size:8.6px;line-height:10px;color:#333;transform:translateY(0.34px) scaleX(0.926);-webkit-text-stroke:0.15px #333;">$250.00 - 550.00</span>
<span class="t" style="left:277.7px;top:228px;font-size:7.2px;line-height:9px;color:#2b2b2b;transform:translateY(-0.36px) scaleX(1.019);-webkit-text-stroke:0.35px #2b2b2b;">250.00</span>
<span class="t" style="left:351.4px;top:228px;font-size:7.2px;line-height:9px;color:#2b2b2b;transform:translateY(-0.36px) scaleX(1.019);-webkit-text-stroke:0.35px #2b2b2b;">250.00</span>
<span class="t" style="left:425.1px;top:228px;font-size:7.2px;line-height:9px;color:#2b2b2b;transform:translateY(-0.36px) scaleX(1.019);-webkit-text-stroke:0.35px #2b2b2b;">250.00</span>
<span class="t" style="left:498.8px;top:228px;font-size:7.2px;line-height:9px;color:#2b2b2b;transform:translateY(-0.36px) scaleX(1.019);-webkit-text-stroke:0.35px #2b2b2b;">250.00</span>
<span class="t" style="left:572.5px;top:228px;font-size:7.2px;line-height:9px;color:#2b2b2b;transform:translateY(-0.36px) scaleX(1.019);-webkit-text-stroke:0.35px #2b2b2b;">250.00</span>
<span class="t" style="left:646.2px;top:228px;font-size:7.2px;line-height:9px;color:#2b2b2b;transform:translateY(-0.36px) scaleX(1.019);-webkit-text-stroke:0.35px #2b2b2b;">250.00</span>
<span class="t" style="left:66px;top:254px;font-size:7.6px;line-height:9px;color:#222;transform:translateY(0.10px) scaleX(0.853);-webkit-text-stroke:0.22px #222;">EMPLOY</span>
<span class="t" style="left:99.1px;top:256px;font-size:6.5px;line-height:7px;color:#262626;transform:translateY(0.11px) scaleX(1.037);-webkit-text-stroke:0.3px #262626;">12</span>
<span class="t" style="left:277.7px;top:254px;font-size:7.2px;line-height:9px;color:#2b2b2b;transform:translateY(0.36px) scaleX(1.019);-webkit-text-stroke:0.35px #2b2b2b;">250.00</span>
<span class="t" style="left:351.4px;top:254px;font-size:7.2px;line-height:9px;color:#2b2b2b;transform:translateY(0.36px) scaleX(1.019);-webkit-text-stroke:0.35px #2b2b2b;">250.00</span>
<span class="t" style="left:425.1px;top:254px;font-size:7.2px;line-height:9px;color:#2b2b2b;transform:translateY(0.36px) scaleX(1.019);-webkit-text-stroke:0.35px #2b2b2b;">250.00</span>
<span class="t" style="left:498.8px;top:254px;font-size:7.2px;line-height:9px;color:#2b2b2b;transform:translateY(0.36px) scaleX(1.019);-webkit-text-stroke:0.35px #2b2b2b;">250.00</span>
<span class="t" style="left:572.5px;top:254px;font-size:7.2px;line-height:9px;color:#2b2b2b;transform:translateY(0.36px) scaleX(1.019);-webkit-text-stroke:0.35px #2b2b2b;">250.00</span>
<span class="t" style="left:646.2px;top:254px;font-size:7.2px;line-height:9px;color:#2b2b2b;transform:translateY(0.36px) scaleX(1.019);-webkit-text-stroke:0.35px #2b2b2b;">250.00</span>
<span class="t" style="left:66px;top:281px;font-size:7.6px;line-height:9px;color:#222;transform:translateY(-0.18px) scaleX(0.888);-webkit-text-stroke:0.22px #222;">HIL</span>
<span class="t" style="left:83.3px;top:283px;font-size:6.5px;line-height:7px;color:#262626;transform:translateY(-0.17px) scaleX(1.037);-webkit-text-stroke:0.3px #262626;">08</span>
<span class="t" style="left:277.7px;top:281px;font-size:7.2px;line-height:9px;color:#2b2b2b;transform:translateY(0.08px) scaleX(1.019);-webkit-text-stroke:0.12px #2b2b2b;">350.00</span>
<span class="t" style="left:351.4px;top:281px;font-size:7.2px;line-height:9px;color:#2b2b2b;transform:translateY(0.08px) scaleX(1.019);-webkit-text-stroke:0.12px #2b2b2b;">350.00</span>
<span class="t" style="left:425.1px;top:281px;font-size:7.2px;line-height:9px;color:#2b2b2b;transform:translateY(0.08px) scaleX(1.019);-webkit-text-stroke:0.12px #2b2b2b;">350.00</span>
<span class="t" style="left:498.8px;top:281px;font-size:7.2px;line-height:9px;color:#2b2b2b;transform:translateY(0.08px) scaleX(1.019);-webkit-text-stroke:0.12px #2b2b2b;">350.00</span>
<span class="t" style="left:572.5px;top:281px;font-size:7.2px;line-height:9px;color:#2b2b2b;transform:translateY(0.08px) scaleX(1.019);-webkit-text-stroke:0.12px #2b2b2b;">350.00</span>
<span class="t" style="left:646.2px;top:281px;font-size:7.2px;line-height:9px;color:#2b2b2b;transform:translateY(0.08px) scaleX(1.019);-webkit-text-stroke:0.12px #2b2b2b;">350.00</span>
<span class="t" style="left:66px;top:308px;font-size:7.6px;line-height:9px;color:#222;transform:translateY(-0.46px) scaleX(0.843);-webkit-text-stroke:0.22px #222;">RACK</span>
<span class="t" style="left:90.3px;top:310px;font-size:6.5px;line-height:7px;color:#262626;transform:translateY(-0.45px) scaleX(0.981);-webkit-text-stroke:0.3px #262626;">04</span>
<span class="t" style="left:277.7px;top:308px;font-size:7.2px;line-height:9px;color:#2b2b2b;transform:translateY(-0.20px) scaleX(1.019);-webkit-text-stroke:0.12px #2b2b2b;">450.00</span>
<span class="t" style="left:351.4px;top:308px;font-size:7.2px;line-height:9px;color:#2b2b2b;transform:translateY(-0.20px) scaleX(1.019);-webkit-text-stroke:0.12px #2b2b2b;">450.00</span>
<span class="t" style="left:425.1px;top:308px;font-size:7.2px;line-height:9px;color:#2b2b2b;transform:translateY(-0.20px) scaleX(1.019);-webkit-text-stroke:0.12px #2b2b2b;">450.00</span>
<span class="t" style="left:498.8px;top:308px;font-size:7.2px;line-height:9px;color:#2b2b2b;transform:translateY(-0.20px) scaleX(1.019);-webkit-text-stroke:0.12px #2b2b2b;">450.00</span>
<span class="t" style="left:572.5px;top:308px;font-size:7.2px;line-height:9px;color:#2b2b2b;transform:translateY(-0.20px) scaleX(1.019);-webkit-text-stroke:0.12px #2b2b2b;">450.00</span>
<span class="t" style="left:646.2px;top:308px;font-size:7.2px;line-height:9px;color:#2b2b2b;transform:translateY(-0.20px) scaleX(1.019);-webkit-text-stroke:0.12px #2b2b2b;">450.00</span>
<span class="t" style="left:66px;top:334px;font-size:7.6px;line-height:9px;color:#222;transform:translateY(0.26px) scaleX(0.875);-webkit-text-stroke:0.22px #222;">NCORP</span>
<span class="t" style="left:96.4px;top:336px;font-size:6.5px;line-height:7px;color:#262626;transform:translateY(0.27px) scaleX(0.898);-webkit-text-stroke:0.3px #262626;">14</span>
<span class="t" style="left:277.7px;top:335px;font-size:7.2px;line-height:9px;color:#2b2b2b;transform:translateY(-0.48px) scaleX(1.019);-webkit-text-stroke:0.12px #2b2b2b;">550.00</span>
<span class="t" style="left:351.4px;top:335px;font-size:7.2px;line-height:9px;color:#2b2b2b;transform:translateY(-0.48px) scaleX(1.019);-webkit-text-stroke:0.12px #2b2b2b;">550.00</span>
<span class="t" style="left:425.1px;top:335px;font-size:7.2px;line-height:9px;color:#2b2b2b;transform:translateY(-0.48px) scaleX(1.019);-webkit-text-stroke:0.12px #2b2b2b;">550.00</span>
<span class="t" style="left:498.8px;top:335px;font-size:7.2px;line-height:9px;color:#2b2b2b;transform:translateY(-0.48px) scaleX(1.019);-webkit-text-stroke:0.12px #2b2b2b;">550.00</span>
<span class="t" style="left:572.5px;top:335px;font-size:7.2px;line-height:9px;color:#2b2b2b;transform:translateY(-0.48px) scaleX(1.019);-webkit-text-stroke:0.12px #2b2b2b;">550.00</span>
<span class="t" style="left:646.2px;top:335px;font-size:7.2px;line-height:9px;color:#2b2b2b;transform:translateY(-0.48px) scaleX(1.019);-webkit-text-stroke:0.12px #2b2b2b;">550.00</span>
<span class="t" style="left:62px;top:361px;font-size:9px;line-height:10px;color:#262626;transform:translateY(0.08px) scaleX(0.952);-webkit-text-stroke:0.3px #262626;">Queen Non-Smoking</span>
<span class="t" style="left:148.6px;top:363px;font-size:6.5px;line-height:7px;color:#262626;transform:translateY(0.49px) scaleX(0.926);-webkit-text-stroke:0.3px #262626;">40</span>
<span class="t" style="left:166px;top:361px;font-size:8.6px;line-height:10px;color:#333;transform:translateY(-0.06px) scaleX(0.926);-webkit-text-stroke:0.15px #333;">$300.00 - 600.00</span>
<span class="t" style="left:277.7px;top:361px;font-size:7.2px;line-height:9px;color:#2b2b2b;transform:translateY(0.24px) scaleX(1.019);-webkit-text-stroke:0.12px #2b2b2b;">300.00</span>
<span class="t" style="left:351.4px;top:361px;font-size:7.2px;line-height:9px;color:#2b2b2b;transform:translateY(0.24px) scaleX(1.019);-webkit-text-stroke:0.12px #2b2b2b;">300.00</span>
<span class="t" style="left:425.1px;top:361px;font-size:7.2px;line-height:9px;color:#2b2b2b;transform:translateY(0.24px) scaleX(1.019);-webkit-text-stroke:0.12px #2b2b2b;">300.00</span>
<span class="t" style="left:498.8px;top:361px;font-size:7.2px;line-height:9px;color:#2b2b2b;transform:translateY(0.24px) scaleX(1.019);-webkit-text-stroke:0.12px #2b2b2b;">300.00</span>
<span class="t" style="left:572.5px;top:361px;font-size:7.2px;line-height:9px;color:#2b2b2b;transform:translateY(0.24px) scaleX(1.019);-webkit-text-stroke:0.12px #2b2b2b;">300.00</span>
<span class="t" style="left:646.2px;top:361px;font-size:7.2px;line-height:9px;color:#2b2b2b;transform:translateY(0.24px) scaleX(1.019);-webkit-text-stroke:0.12px #2b2b2b;">300.00</span>
<span class="t" style="left:66px;top:388px;font-size:7.6px;line-height:9px;color:#222;transform:translateY(-0.30px) scaleX(0.853);-webkit-text-stroke:0.22px #222;">EMPLOY</span>
<span class="t" style="left:99.1px;top:390px;font-size:6.5px;line-height:7px;color:#262626;transform:translateY(-0.29px) scaleX(1.037);-webkit-text-stroke:0.3px #262626;">14</span>
<span class="t" style="left:277.7px;top:388px;font-size:7.2px;line-height:9px;color:#2b2b2b;transform:scaleX(1.019);-webkit-text-stroke:0.12px #2b2b2b;">300.00</span>
<span class="t" style="left:351.4px;top:388px;font-size:7.2px;line-height:9px;color:#2b2b2b;transform:scaleX(1.019);-webkit-text-stroke:0.12px #2b2b2b;">300.00</span>
<span class="t" style="left:425.1px;top:388px;font-size:7.2px;line-height:9px;color:#2b2b2b;transform:scaleX(1.019);-webkit-text-stroke:0.12px #2b2b2b;">300.00</span>
<span class="t" style="left:498.8px;top:388px;font-size:7.2px;line-height:9px;color:#2b2b2b;transform:scaleX(1.019);-webkit-text-stroke:0.12px #2b2b2b;">300.00</span>
<span class="t" style="left:572.5px;top:388px;font-size:7.2px;line-height:9px;color:#2b2b2b;transform:scaleX(1.019);-webkit-text-stroke:0.12px #2b2b2b;">300.00</span>
<span class="t" style="left:646.2px;top:388px;font-size:7.2px;line-height:9px;color:#2b2b2b;transform:scaleX(1.019);-webkit-text-stroke:0.12px #2b2b2b;">300.00</span>
<span class="t" style="left:66px;top:414px;font-size:7.6px;line-height:9px;color:#222;transform:translateY(0.42px) scaleX(0.888);-webkit-text-stroke:0.22px #222;">HIL</span>
<span class="t" style="left:83.3px;top:416px;font-size:6.5px;line-height:7px;color:#262626;transform:translateY(0.43px) scaleX(1.037);-webkit-text-stroke:0.3px #262626;">08</span>
<span class="t" style="left:277.7px;top:415px;font-size:7.2px;line-height:9px;color:#2b2b2b;transform:translateY(-0.32px) scaleX(1.019);-webkit-text-stroke:0.12px #2b2b2b;">400.00</span>
<span class="t" style="left:351.4px;top:415px;font-size:7.2px;line-height:9px;color:#2b2b2b;transform:translateY(-0.32px) scaleX(1.019);-webkit-text-stroke:0.12px #2b2b2b;">400.00</span>
<span class="t" style="left:425.1px;top:415px;font-size:7.2px;line-height:9px;color:#2b2b2b;transform:translateY(-0.32px) scaleX(1.019);-webkit-text-stroke:0.12px #2b2b2b;">400.00</span>
<span class="t" style="left:498.8px;top:415px;font-size:7.2px;line-height:9px;color:#2b2b2b;transform:translateY(-0.32px) scaleX(1.019);-webkit-text-stroke:0.12px #2b2b2b;">400.00</span>
<span class="t" style="left:572.5px;top:415px;font-size:7.2px;line-height:9px;color:#2b2b2b;transform:translateY(-0.32px) scaleX(1.019);-webkit-text-stroke:0.12px #2b2b2b;">400.00</span>
<span class="t" style="left:646.2px;top:415px;font-size:7.2px;line-height:9px;color:#2b2b2b;transform:translateY(-0.32px) scaleX(1.019);-webkit-text-stroke:0.12px #2b2b2b;">400.00</span>
</div></div>
</body></html>
